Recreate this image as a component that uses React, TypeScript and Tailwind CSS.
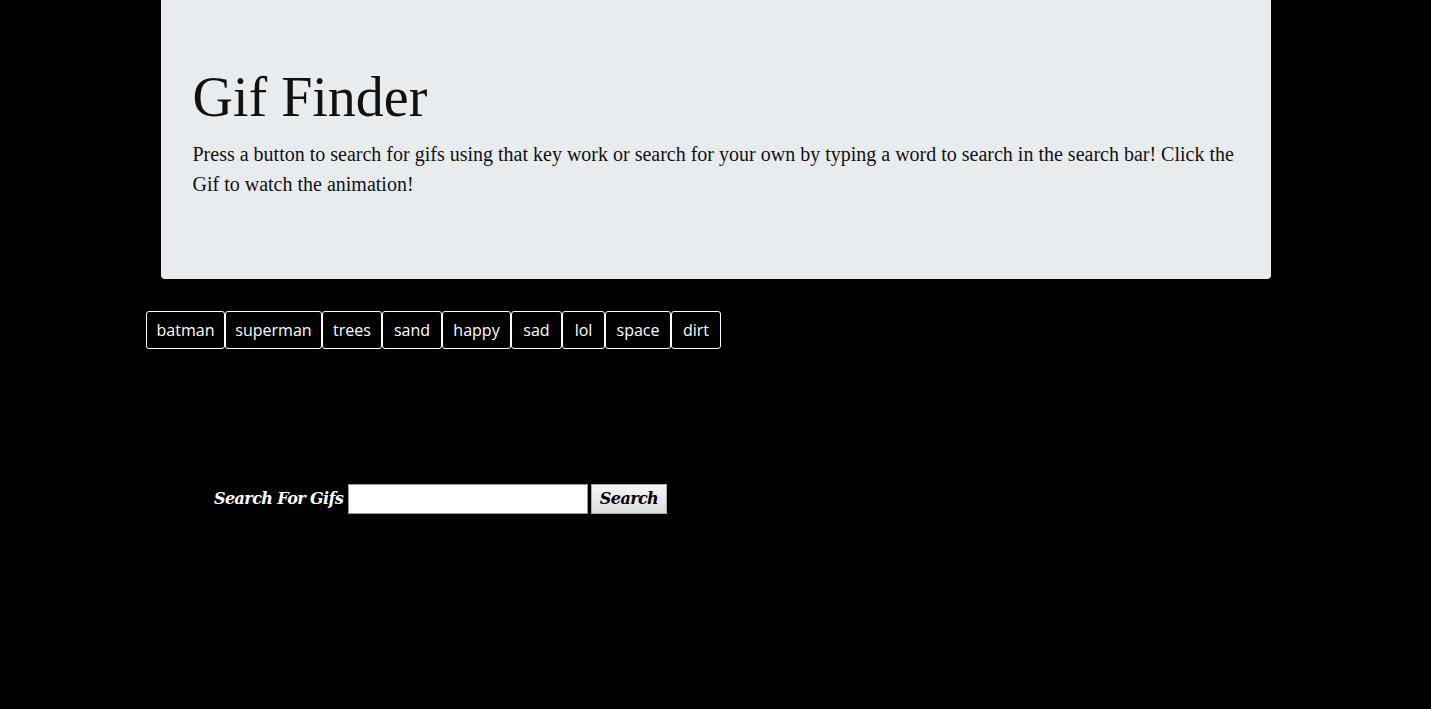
import React, { useState } from 'react';

const topics = [
    { name: 'batman', w: 'w-[79px]' },
    { name: 'superman', w: 'w-[97px]' },
    { name: 'trees', w: 'w-[60px]' },
    { name: 'sand', w: 'w-[60px]' },
    { name: 'happy', w: 'w-[69px]' },
    { name: 'sad', w: 'w-[51px]' },
    { name: 'lol', w: 'w-[43px]' },
    { name: 'space', w: 'w-[66px]' },
    { name: 'dirt', w: 'w-[50px]' },
];

export default function App() {
    const [query, setQuery] = useState('');

    return (
        <div className="min-h-[709px] bg-black">
            {/* Jumbotron */}
            <div className="mx-auto w-[1110px] rounded-b bg-[#e9ecef] px-8 pt-16 pb-16 text-[#111] font-['Liberation_Serif',serif]">
                <h1 className="text-[56px] leading-[1.2] font-normal mb-2">Gif Finder</h1>
                <p className="text-[20px] leading-[30px] mb-4">
                    Press a button to search for gifs using that key work or search for your own by typing a word to search in the search bar! Click the Gif to watch the animation!
                </p>
            </div>

            {/* Topic buttons */}
            <div className="ml-[146px] mt-8 flex font-['Open_Sans',sans-serif]">
                {topics.map((t) => (
                    <button
                        key={t.name}
                        type="button"
                        className={`${t.w} h-[38px] flex items-center justify-center rounded-[3px] border border-white bg-black text-[16px] text-white`}
                    >
                        {t.name}
                    </button>
                ))}
            </div>

            {/* Search form */}
            <form
                onSubmit={(e) => e.preventDefault()}
                className="ml-[214px] mt-[135px] flex items-center font-['DejaVu_Serif',serif]"
            >
                <label className="w-[134px] text-[16px] font-bold italic text-white tracking-[-0.6px] whitespace-nowrap">Search For Gifs</label>
                <input
                    type="text"
                    value={query}
                    onChange={(e) => setQuery(e.target.value)}
                    className="h-[30px] w-[240px] border border-[#999] bg-white outline-none px-1"
                />
                <button
                    type="submit"
                    className="ml-[3px] h-[30px] w-[76px] border border-[#aaa] bg-gradient-to-b from-[#f6f6f6] to-[#dddddd] text-[16px] font-bold italic text-black tracking-[-0.6px]"
                >
                    Search
                </button>
            </form>
        </div>
    );
}
